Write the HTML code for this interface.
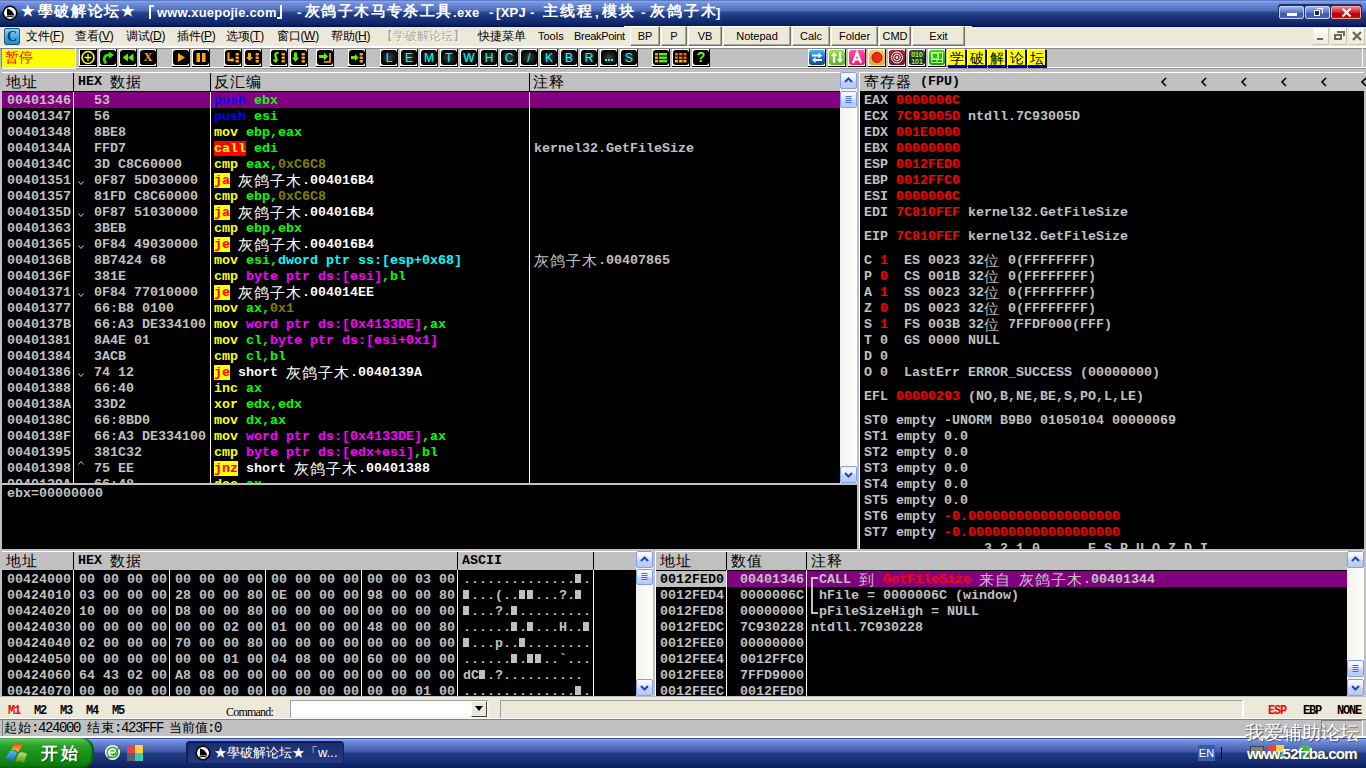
<!DOCTYPE html><html><head><meta charset="utf-8"><style>
*{margin:0;padding:0;box-sizing:border-box}
html,body{width:1366px;height:768px;overflow:hidden;background:#c0c0c0;position:relative;font-family:"Liberation Sans",sans-serif}
div{position:absolute}
.m{font-family:"Liberation Mono",monospace;font-weight:bold;font-size:13.33px;line-height:16px;height:16px;white-space:pre;color:#c0c0c0;letter-spacing:0}
.m i{display:inline-block;width:16px;height:16px;line-height:16px;vertical-align:top;font-style:normal;font-weight:normal;font-size:15px;font-family:"Liberation Sans",sans-serif}
.blk{display:inline-block;width:8px;height:9px;position:relative;vertical-align:0}
.blk:after{content:"";position:absolute;left:0;top:0;width:6px;height:9px;background:#c0c0c0}
.ui{font-family:"Liberation Sans",sans-serif;font-size:11px;line-height:13px;white-space:pre;color:#000}
.hdr{background:#c0c0c0}
.tb{width:18px;height:18px;background:#000;border-radius:3px}
.sb{background:linear-gradient(90deg,#f3f1ec,#fefefb)}
.sbb{background:linear-gradient(180deg,#fdfdff 0%,#e4e8fc 45%,#c4d2fc 55%,#b8c8f8 100%);border:1px solid #7ca0f4;border-radius:2px}
</style></head><body><div style="left:0px;top:0px;width:1366px;height:27px;background:linear-gradient(180deg,#2f4a90 0px,#8ca8f0 1px,#7090e0 3px,#4e6ab4 11px,#2c4894 12px,#1e3882 16px,#122a6c 22px,#0c2060 25px,#001060 26px)"></div>
<div style="left:624px;top:26px;width:348px;height:1px;background:#f8f6ee"></div>
<div style="left:21px;top:2px;white-space:pre;color:#fff;font-weight:bold;font-size:15px;line-height:18px"><i style="display:inline-block;width:16.7px;font-style:normal">★</i><i style="display:inline-block;width:16.7px;font-style:normal">學</i><i style="display:inline-block;width:16.7px;font-style:normal">破</i><i style="display:inline-block;width:16.7px;font-style:normal">解</i><i style="display:inline-block;width:16.7px;font-style:normal">论</i><i style="display:inline-block;width:16.7px;font-style:normal">坛</i><i style="display:inline-block;width:16.7px;font-style:normal">★</i></div>
<div style="left:149px;top:5px;width:2px;height:14px;background:#fff"></div>
<div style="left:149px;top:5px;width:5px;height:2px;background:#fff"></div>
<div style="left:157px;top:4px;white-space:pre;color:#fff;font-weight:bold;font-size:13px;line-height:18px;letter-spacing:0.2px">www.xuepojie.com</div>
<div style="left:280px;top:5px;width:2px;height:14px;background:#fff"></div>
<div style="left:277px;top:17px;width:5px;height:2px;background:#fff"></div>
<div style="left:297px;top:4px;white-space:pre;color:#fff;font-weight:bold;font-size:13px;line-height:18px;letter-spacing:0px">-</div>
<div style="left:305px;top:2px;white-space:pre;color:#fff;font-weight:bold;font-size:15px;line-height:18px"><i style="display:inline-block;width:16.4px;font-style:normal">灰</i><i style="display:inline-block;width:16.4px;font-style:normal">鸽</i><i style="display:inline-block;width:16.4px;font-style:normal">子</i><i style="display:inline-block;width:16.4px;font-style:normal">木</i><i style="display:inline-block;width:16.4px;font-style:normal">马</i><i style="display:inline-block;width:16.4px;font-style:normal">专</i><i style="display:inline-block;width:16.4px;font-style:normal">杀</i><i style="display:inline-block;width:16.4px;font-style:normal">工</i><i style="display:inline-block;width:16.4px;font-style:normal">具</i></div>
<div style="left:453px;top:4px;white-space:pre;color:#fff;font-weight:bold;font-size:13px;line-height:18px;letter-spacing:0.3px">.exe</div>
<div style="left:489px;top:4px;white-space:pre;color:#fff;font-weight:bold;font-size:13px;line-height:18px;letter-spacing:0px">-</div>
<div style="left:496px;top:4px;white-space:pre;color:#fff;font-weight:bold;font-size:13px;line-height:18px;letter-spacing:0.3px">[XPJ</div>
<div style="left:530px;top:4px;white-space:pre;color:#fff;font-weight:bold;font-size:13px;line-height:18px;letter-spacing:0px">-</div>
<div style="left:543px;top:2px;white-space:pre;color:#fff;font-weight:bold;font-size:15px;line-height:18px"><i style="display:inline-block;width:17px;font-style:normal">主</i><i style="display:inline-block;width:17px;font-style:normal">线</i><i style="display:inline-block;width:17px;font-style:normal">程</i></div>
<div style="left:595px;top:4px;white-space:pre;color:#fff;font-weight:bold;font-size:13px;line-height:18px;letter-spacing:0px">,</div>
<div style="left:602px;top:2px;white-space:pre;color:#fff;font-weight:bold;font-size:15px;line-height:18px"><i style="display:inline-block;width:17px;font-style:normal">模</i><i style="display:inline-block;width:17px;font-style:normal">块</i></div>
<div style="left:641px;top:4px;white-space:pre;color:#fff;font-weight:bold;font-size:13px;line-height:18px;letter-spacing:0px">-</div>
<div style="left:650px;top:2px;white-space:pre;color:#fff;font-weight:bold;font-size:15px;line-height:18px"><i style="display:inline-block;width:17px;font-style:normal">灰</i><i style="display:inline-block;width:17px;font-style:normal">鸽</i><i style="display:inline-block;width:17px;font-style:normal">子</i><i style="display:inline-block;width:17px;font-style:normal">木</i></div>
<div style="left:716px;top:4px;white-space:pre;color:#fff;font-weight:bold;font-size:13px;line-height:18px;letter-spacing:0px">]</div>
<div style="left:1278px;top:4px;width:84px;height:17px;background:#20306c;border-radius:3px"></div>
<div style="left:1279px;top:6px;width:25px;height:13px;background:linear-gradient(180deg,#9ab4f4,#5a78c8 50%,#3a58a8 51%,#4a68b8);border:1px solid #c0d0ff;border-radius:2px"></div>
<div style="left:1287px;top:13px;width:10px;height:3px;background:#fff;border:0"></div>
<div style="left:1305px;top:6px;width:25px;height:13px;background:linear-gradient(180deg,#9ab4f4,#5a78c8 50%,#3a58a8 51%,#4a68b8);border:1px solid #c0d0ff;border-radius:2px"></div>
<div style="left:1314px;top:10px;width:6px;height:6px;border:1.5px solid #fff;background:#1a2a60"></div>
<div style="left:1317px;top:8px;width:6px;height:6px;border:1.5px solid #fff;border-left:none;border-bottom:none"></div>
<div style="left:1331px;top:6px;width:30px;height:13px;background:linear-gradient(180deg,#f08080,#d02020 50%,#b00000 51%,#c01010);border:1px solid #ffa0a0;border-radius:2px"></div>
<svg style="position:absolute;left:1341px;top:7px" width="11" height="11"><path d="M1.5 1.5 L9.5 9.5 M9.5 1.5 L1.5 9.5" stroke="#fff" stroke-width="2.2"/></svg>
<div style="left:0px;top:27px;width:1366px;height:19px;background:#ece9d8"></div>
<div style="left:0px;top:46px;width:1366px;height:2px;background:#fff"></div>
<div style="left:4px;top:28px;width:16px;height:17px;background:linear-gradient(180deg,#8cd4f4,#3aa8e0 60%,#2a88c0);border:1px solid #1a5a80;border-radius:2px"></div>
<div style="left:7px;top:29px;font-family:'Liberation Serif',serif;font-size:14px;line-height:15px;color:#10405a;font-weight:bold">C</div>
<div class="ui" style="left:26px;top:29px;font-size:12px;line-height:14px;letter-spacing:-0.3px">文件(<u>F</u>)</div>
<div class="ui" style="left:75px;top:29px;font-size:12px;line-height:14px;letter-spacing:-0.3px">查看(<u>V</u>)</div>
<div class="ui" style="left:126px;top:29px;font-size:12px;line-height:14px;letter-spacing:-0.3px">调试(<u>D</u>)</div>
<div class="ui" style="left:177px;top:29px;font-size:12px;line-height:14px;letter-spacing:-0.3px">插件(<u>P</u>)</div>
<div class="ui" style="left:226px;top:29px;font-size:12px;line-height:14px;letter-spacing:-0.3px">选项(<u>T</u>)</div>
<div class="ui" style="left:277px;top:29px;font-size:12px;line-height:14px;letter-spacing:-0.3px">窗口(<u>W</u>)</div>
<div class="ui" style="left:331px;top:29px;font-size:12px;line-height:14px;letter-spacing:-0.3px">帮助(<u>H</u>)</div>
<div class="ui" style="left:381px;top:29px;font-size:12px;line-height:14px;color:#aca899;text-shadow:1px 1px 0 #fff">【学破解论坛】</div>
<div class="ui" style="left:478px;top:29px;font-size:12px;line-height:14px">快捷菜单</div>
<div class="ui" style="left:538px;top:29px;font-size:11px;line-height:14px">Tools</div>
<div class="ui" style="left:574px;top:29px;font-size:11px;line-height:14px;letter-spacing:-0.3px">BreakPoint</div>
<div style="left:630px;top:26px;width:30px;height:20px;background:#ece9d8;border-top:1px solid #fff;border-left:1px solid #fff;border-right:1px solid #716f64;border-bottom:1px solid #716f64;box-shadow:inset -1px -1px 0 #aca899"><div class="ui" style="position:static;text-align:center;padding-top:3px;font-size:11px">BP</div></div>
<div style="left:661px;top:26px;width:26px;height:20px;background:#ece9d8;border-top:1px solid #fff;border-left:1px solid #fff;border-right:1px solid #716f64;border-bottom:1px solid #716f64;box-shadow:inset -1px -1px 0 #aca899"><div class="ui" style="position:static;text-align:center;padding-top:3px;font-size:11px">P</div></div>
<div style="left:688px;top:26px;width:34px;height:20px;background:#ece9d8;border-top:1px solid #fff;border-left:1px solid #fff;border-right:1px solid #716f64;border-bottom:1px solid #716f64;box-shadow:inset -1px -1px 0 #aca899"><div class="ui" style="position:static;text-align:center;padding-top:3px;font-size:11px">VB</div></div>
<div style="left:723px;top:26px;width:68px;height:20px;background:#ece9d8;border-top:1px solid #fff;border-left:1px solid #fff;border-right:1px solid #716f64;border-bottom:1px solid #716f64;box-shadow:inset -1px -1px 0 #aca899"><div class="ui" style="position:static;text-align:center;padding-top:3px;font-size:11px">Notepad</div></div>
<div style="left:792px;top:26px;width:38px;height:20px;background:#ece9d8;border-top:1px solid #fff;border-left:1px solid #fff;border-right:1px solid #716f64;border-bottom:1px solid #716f64;box-shadow:inset -1px -1px 0 #aca899"><div class="ui" style="position:static;text-align:center;padding-top:3px;font-size:11px">Calc</div></div>
<div style="left:831px;top:26px;width:47px;height:20px;background:#ece9d8;border-top:1px solid #fff;border-left:1px solid #fff;border-right:1px solid #716f64;border-bottom:1px solid #716f64;box-shadow:inset -1px -1px 0 #aca899"><div class="ui" style="position:static;text-align:center;padding-top:3px;font-size:11px">Folder</div></div>
<div style="left:879px;top:26px;width:32px;height:20px;background:#ece9d8;border-top:1px solid #fff;border-left:1px solid #fff;border-right:1px solid #716f64;border-bottom:1px solid #716f64;box-shadow:inset -1px -1px 0 #aca899"><div class="ui" style="position:static;text-align:center;padding-top:3px;font-size:11px">CMD</div></div>
<div style="left:912px;top:26px;width:53px;height:20px;background:#ece9d8;border-top:1px solid #fff;border-left:1px solid #fff;border-right:1px solid #716f64;border-bottom:1px solid #716f64;box-shadow:inset -1px -1px 0 #aca899"><div class="ui" style="position:static;text-align:center;padding-top:3px;font-size:11px">Exit</div></div>
<div style="left:1313px;top:28px;width:16px;height:17px;background:linear-gradient(180deg,#fefefe,#ece9d8);border-right:1px solid #c8c4b0;border-bottom:1px solid #c8c4b0"></div>
<div style="left:1331px;top:28px;width:16px;height:17px;background:linear-gradient(180deg,#fefefe,#ece9d8);border-right:1px solid #c8c4b0;border-bottom:1px solid #c8c4b0"></div>
<div style="left:1349px;top:28px;width:16px;height:17px;background:linear-gradient(180deg,#fefefe,#ece9d8);border-right:1px solid #c8c4b0;border-bottom:1px solid #c8c4b0"></div>
<div style="left:1317px;top:38px;width:6px;height:2px;background:#6a6a5a"></div>
<div style="left:1334px;top:34px;width:8px;height:6px;border:2px solid #6a6a5a;border-top-width:2px"></div>
<div style="left:1337px;top:31px;width:8px;height:5px;border-top:2px solid #6a6a5a;border-right:2px solid #6a6a5a"></div>
<svg style="position:absolute;left:1352px;top:31px" width="10" height="10"><path d="M1 1 L9 9 M9 1 L1 9" stroke="#6a6a5a" stroke-width="2.4"/></svg>
<div style="left:0px;top:48px;width:1366px;height:1px;background:#8a8a8a"></div>
<div style="left:0px;top:49px;width:1366px;height:18px;background:#c0c0c0"></div>
<div style="left:0px;top:67px;width:1366px;height:1px;background:#fff"></div>
<div style="left:0px;top:68px;width:1366px;height:1px;background:#9a9a9a"></div>
<div style="left:0px;top:69px;width:1366px;height:3px;background:#c0c0c0"></div>
<div style="left:1362px;top:48px;width:1px;height:20px;background:#fff"></div>
<div style="left:1px;top:48px;width:75px;height:21px;background:#ffff00;border:1px solid #808080;border-right-color:#fff;border-bottom-color:#fff"></div>
<div class="ui" style="left:5px;top:49px;font-size:14px;line-height:16px;color:#ff0000">暂停</div>
<div style="left:79px;top:49px;width:18px;height:18px;background:#fffbef;border-right:1px solid #000;border-bottom:1px solid #000"></div>
<div style="left:80px;top:50px;width:16px;height:15px;background:#000;border-radius:0px"></div>
<div style="left:99px;top:49px;width:18px;height:18px;background:#fffbef;border-right:1px solid #000;border-bottom:1px solid #000"></div>
<div style="left:100px;top:50px;width:16px;height:15px;background:#000;border-radius:3px"></div>
<div style="left:119px;top:49px;width:18px;height:18px;background:#fffbef;border-right:1px solid #000;border-bottom:1px solid #000"></div>
<div style="left:120px;top:50px;width:16px;height:15px;background:#000;border-radius:3px"></div>
<div style="left:139px;top:49px;width:18px;height:18px;background:#fffbef;border-right:1px solid #000;border-bottom:1px solid #000"></div>
<div style="left:140px;top:50px;width:16px;height:15px;background:#000;border-radius:3px"></div>
<div style="left:172px;top:49px;width:18px;height:18px;background:#fffbef;border-right:1px solid #000;border-bottom:1px solid #000"></div>
<div style="left:173px;top:50px;width:16px;height:15px;background:#000;border-radius:3px"></div>
<div style="left:192px;top:49px;width:18px;height:18px;background:#fffbef;border-right:1px solid #000;border-bottom:1px solid #000"></div>
<div style="left:193px;top:50px;width:16px;height:15px;background:#000;border-radius:3px"></div>
<div style="left:224px;top:49px;width:18px;height:18px;background:#fffbef;border-right:1px solid #000;border-bottom:1px solid #000"></div>
<div style="left:225px;top:50px;width:16px;height:15px;background:#000;border-radius:3px"></div>
<div style="left:244px;top:49px;width:18px;height:18px;background:#fffbef;border-right:1px solid #000;border-bottom:1px solid #000"></div>
<div style="left:245px;top:50px;width:16px;height:15px;background:#000;border-radius:3px"></div>
<div style="left:270px;top:49px;width:18px;height:18px;background:#fffbef;border-right:1px solid #000;border-bottom:1px solid #000"></div>
<div style="left:271px;top:50px;width:16px;height:15px;background:#000;border-radius:3px"></div>
<div style="left:290px;top:49px;width:18px;height:18px;background:#fffbef;border-right:1px solid #000;border-bottom:1px solid #000"></div>
<div style="left:291px;top:50px;width:16px;height:15px;background:#000;border-radius:3px"></div>
<div style="left:316px;top:49px;width:18px;height:18px;background:#fffbef;border-right:1px solid #000;border-bottom:1px solid #000"></div>
<div style="left:317px;top:50px;width:16px;height:15px;background:#000;border-radius:3px"></div>
<div style="left:348px;top:49px;width:18px;height:18px;background:#fffbef;border-right:1px solid #000;border-bottom:1px solid #000"></div>
<div style="left:349px;top:50px;width:16px;height:15px;background:#000;border-radius:3px"></div>
<div style="left:380px;top:49px;width:18px;height:18px;background:#fffbef;border-right:1px solid #000;border-bottom:1px solid #000"></div>
<div style="left:381px;top:50px;width:16px;height:15px;background:radial-gradient(#404040,#000 75%);border-radius:3px"></div>
<div style="left:381px;top:51px;width:16px;height:15px;text-align:center;color:#00ffff;font-family:'Liberation Sans',sans-serif;font-size:12px;line-height:15px">L</div>
<div style="left:400px;top:49px;width:18px;height:18px;background:#fffbef;border-right:1px solid #000;border-bottom:1px solid #000"></div>
<div style="left:401px;top:50px;width:16px;height:15px;background:radial-gradient(#404040,#000 75%);border-radius:3px"></div>
<div style="left:401px;top:51px;width:16px;height:15px;text-align:center;color:#00ffff;font-family:'Liberation Sans',sans-serif;font-size:12px;line-height:15px">E</div>
<div style="left:420px;top:49px;width:18px;height:18px;background:#fffbef;border-right:1px solid #000;border-bottom:1px solid #000"></div>
<div style="left:421px;top:50px;width:16px;height:15px;background:radial-gradient(#404040,#000 75%);border-radius:3px"></div>
<div style="left:421px;top:51px;width:16px;height:15px;text-align:center;color:#00ffff;font-family:'Liberation Sans',sans-serif;font-size:12px;line-height:15px">M</div>
<div style="left:440px;top:49px;width:18px;height:18px;background:#fffbef;border-right:1px solid #000;border-bottom:1px solid #000"></div>
<div style="left:441px;top:50px;width:16px;height:15px;background:radial-gradient(#404040,#000 75%);border-radius:3px"></div>
<div style="left:441px;top:51px;width:16px;height:15px;text-align:center;color:#00ffff;font-family:'Liberation Sans',sans-serif;font-size:12px;line-height:15px">T</div>
<div style="left:460px;top:49px;width:18px;height:18px;background:#fffbef;border-right:1px solid #000;border-bottom:1px solid #000"></div>
<div style="left:461px;top:50px;width:16px;height:15px;background:radial-gradient(#404040,#000 75%);border-radius:3px"></div>
<div style="left:461px;top:51px;width:16px;height:15px;text-align:center;color:#00ffff;font-family:'Liberation Sans',sans-serif;font-size:12px;line-height:15px">W</div>
<div style="left:480px;top:49px;width:18px;height:18px;background:#fffbef;border-right:1px solid #000;border-bottom:1px solid #000"></div>
<div style="left:481px;top:50px;width:16px;height:15px;background:radial-gradient(#404040,#000 75%);border-radius:3px"></div>
<div style="left:481px;top:51px;width:16px;height:15px;text-align:center;color:#00ffff;font-family:'Liberation Sans',sans-serif;font-size:12px;line-height:15px">H</div>
<div style="left:500px;top:49px;width:18px;height:18px;background:#fffbef;border-right:1px solid #000;border-bottom:1px solid #000"></div>
<div style="left:501px;top:50px;width:16px;height:15px;background:radial-gradient(#404040,#000 75%);border-radius:3px"></div>
<div style="left:501px;top:51px;width:16px;height:15px;text-align:center;color:#00ffff;font-family:'Liberation Sans',sans-serif;font-size:12px;line-height:15px">C</div>
<div style="left:520px;top:49px;width:18px;height:18px;background:#fffbef;border-right:1px solid #000;border-bottom:1px solid #000"></div>
<div style="left:521px;top:50px;width:16px;height:15px;background:radial-gradient(#404040,#000 75%);border-radius:3px"></div>
<div style="left:521px;top:51px;width:16px;height:15px;text-align:center;color:#00ffff;font-family:'Liberation Sans',sans-serif;font-size:12px;line-height:15px">/</div>
<div style="left:540px;top:49px;width:18px;height:18px;background:#fffbef;border-right:1px solid #000;border-bottom:1px solid #000"></div>
<div style="left:541px;top:50px;width:16px;height:15px;background:radial-gradient(#404040,#000 75%);border-radius:3px"></div>
<div style="left:541px;top:51px;width:16px;height:15px;text-align:center;color:#00ffff;font-family:'Liberation Sans',sans-serif;font-size:12px;line-height:15px">K</div>
<div style="left:560px;top:49px;width:18px;height:18px;background:#fffbef;border-right:1px solid #000;border-bottom:1px solid #000"></div>
<div style="left:561px;top:50px;width:16px;height:15px;background:radial-gradient(#404040,#000 75%);border-radius:3px"></div>
<div style="left:561px;top:51px;width:16px;height:15px;text-align:center;color:#00ffff;font-family:'Liberation Sans',sans-serif;font-size:12px;line-height:15px">B</div>
<div style="left:580px;top:49px;width:18px;height:18px;background:#fffbef;border-right:1px solid #000;border-bottom:1px solid #000"></div>
<div style="left:581px;top:50px;width:16px;height:15px;background:radial-gradient(#404040,#000 75%);border-radius:3px"></div>
<div style="left:581px;top:51px;width:16px;height:15px;text-align:center;color:#00ffff;font-family:'Liberation Sans',sans-serif;font-size:12px;line-height:15px">R</div>
<div style="left:600px;top:49px;width:18px;height:18px;background:#fffbef;border-right:1px solid #000;border-bottom:1px solid #000"></div>
<div style="left:601px;top:50px;width:16px;height:15px;background:radial-gradient(#404040,#000 75%);border-radius:3px"></div>
<svg style="position:absolute;left:601px;top:50px" width="16" height="15"><rect x="4" y="9" width="2" height="2" fill="#00ffff"/><rect x="7" y="9" width="2" height="2" fill="#00ffff"/><rect x="10" y="9" width="2" height="2" fill="#00ffff"/></svg>
<div style="left:620px;top:49px;width:18px;height:18px;background:#fffbef;border-right:1px solid #000;border-bottom:1px solid #000"></div>
<div style="left:621px;top:50px;width:16px;height:15px;background:radial-gradient(#404040,#000 75%);border-radius:3px"></div>
<div style="left:621px;top:51px;width:16px;height:15px;text-align:center;color:#00ffff;font-family:'Liberation Sans',sans-serif;font-size:12px;line-height:15px">S</div>
<div style="left:652px;top:49px;width:18px;height:18px;background:#fffbef;border-right:1px solid #000;border-bottom:1px solid #000"></div>
<div style="left:653px;top:50px;width:16px;height:15px;background:#000;border-radius:3px"></div>
<div style="left:672px;top:49px;width:18px;height:18px;background:#fffbef;border-right:1px solid #000;border-bottom:1px solid #000"></div>
<div style="left:673px;top:50px;width:16px;height:15px;background:#000;border-radius:3px"></div>
<div style="left:692px;top:49px;width:18px;height:18px;background:#fffbef;border-right:1px solid #000;border-bottom:1px solid #000"></div>
<div style="left:693px;top:50px;width:16px;height:15px;background:#000;border-radius:3px"></div>
<svg style="position:absolute;left:80px;top:50px" width="16" height="15"><circle cx="8" cy="7.5" r="6" fill="none" stroke="#ffff00" stroke-width="1.6"/><path d="M8 4V11M4.5 7.5H11.5" stroke="#ffff00" stroke-width="1.3"/></svg>
<svg style="position:absolute;left:100px;top:50px" width="16" height="15"><path d="M6 13.5 Q3 9 5 6.5 Q7 4.5 10 5" fill="none" stroke="#20f000" stroke-width="2.6"/><path d="M9 1.5 L14 5 L9 8.5Z" fill="#20f000"/></svg>
<svg style="position:absolute;left:120px;top:50px" width="16" height="15"><path d="M8 3.5 L2.5 7.5 L8 11.5Z M13.5 3.5 L8 7.5 L13.5 11.5Z" fill="#50f000"/></svg>
<div style="left:140px;top:50px;width:16px;height:15px;text-align:center;color:#ffa000;font-weight:bold;font-size:12px;line-height:15px;font-family:'Liberation Serif',serif">X</div>
<svg style="position:absolute;left:173px;top:50px" width="16" height="15"><path d="M5 3 L12 7.5 L5 12Z" fill="#ffa800"/></svg>
<svg style="position:absolute;left:193px;top:50px" width="16" height="15"><rect x="3.5" y="3" width="3.5" height="9" fill="#ffa800"/><rect x="9" y="3" width="3.5" height="9" fill="#ffa800"/></svg>
<svg style="position:absolute;left:225px;top:50px" width="16" height="15"><path d="M3.5 2.5V10H7" fill="none" stroke="#ffa800" stroke-width="2"/><path d="M6.5 7.5L9.5 10L6.5 12.5Z" fill="#ffa800"/><rect x="10.5" y="3" width="3.5" height="2.4" rx="1" fill="#ffa800"/><rect x="10.5" y="6.5" width="3.5" height="2.4" rx="1" fill="#ffa800"/><rect x="10.5" y="10" width="3.5" height="2.4" rx="1" fill="#ffa800"/></svg>
<svg style="position:absolute;left:245px;top:50px" width="16" height="15"><rect x="3" y="3" width="3" height="4" fill="#ffa800"/><path d="M1 7H8L4.5 11Z" fill="#ffa800"/><rect x="10.5" y="3" width="3.5" height="2.4" rx="1" fill="#ffa800"/><rect x="10.5" y="6.5" width="3.5" height="2.4" rx="1" fill="#ffa800"/><rect x="10.5" y="10" width="3.5" height="2.4" rx="1" fill="#ffa800"/></svg>
<svg style="position:absolute;left:271px;top:50px" width="16" height="15"><path d="M7.5 2.5 Q3 3.5 4.5 6.5 Q6 8.5 4.5 10" fill="none" stroke="#60f000" stroke-width="2.2"/><path d="M1.5 9.5H8L4.5 13Z" fill="#60f000"/><rect x="10.5" y="3" width="3.5" height="2.4" rx="1" fill="#ffa800"/><rect x="10.5" y="6.5" width="3.5" height="2.4" rx="1" fill="#ffa800"/><rect x="10.5" y="10" width="3.5" height="2.4" rx="1" fill="#ffa800"/></svg>
<svg style="position:absolute;left:291px;top:50px" width="16" height="15"><rect x="3" y="2.5" width="3" height="5" fill="#60f000"/><path d="M1 7.5H8L4.5 12Z" fill="#60f000"/><rect x="10.5" y="3" width="3.5" height="2.4" rx="1" fill="#ffa800"/><rect x="10.5" y="6.5" width="3.5" height="2.4" rx="1" fill="#ffa800"/><rect x="10.5" y="10" width="3.5" height="2.4" rx="1" fill="#ffa800"/></svg>
<svg style="position:absolute;left:317px;top:50px" width="16" height="15"><rect x="2" y="5" width="5" height="3" fill="#60f000"/><path d="M7 2.5L11 6.5L7 10.5Z" fill="#60f000"/><path d="M13 3V12H7" fill="none" stroke="#ffa800" stroke-width="1.6"/></svg>
<svg style="position:absolute;left:349px;top:50px" width="16" height="15"><rect x="2" y="6" width="4" height="3" fill="#60f000"/><path d="M6 4L9.5 7.5L6 11Z" fill="#60f000"/><rect x="10.5" y="3" width="3.5" height="2.4" rx="1" fill="#ffa800"/><rect x="10.5" y="6.5" width="3.5" height="2.4" rx="1" fill="#ffa800"/><rect x="10.5" y="10" width="3.5" height="2.4" rx="1" fill="#ffa800"/></svg>
<svg style="position:absolute;left:653px;top:50px" width="16" height="15"><rect x="2" y="3" width="3" height="2.4" fill="#ffa800"/><rect x="6" y="3" width="8" height="2.4" fill="#60f000"/><rect x="2" y="6.5" width="3" height="2.4" fill="#ffa800"/><rect x="6" y="6.5" width="8" height="2.4" fill="#60f000"/><rect x="2" y="10" width="3" height="2.4" fill="#ffa800"/><rect x="6" y="10" width="8" height="2.4" fill="#60f000"/></svg>
<svg style="position:absolute;left:673px;top:50px" width="16" height="15"><g fill="#ff6000"><rect x="2" y="3" width="3" height="2.4"/><rect x="6" y="3" width="3.5" height="2.4"/><rect x="10.5" y="3" width="3" height="2.4"/><rect x="2" y="6.5" width="3" height="2.4"/><rect x="6" y="6.5" width="3.5" height="2.4"/><rect x="10.5" y="6.5" width="3" height="2.4"/></g><g fill="#ffc000"><rect x="2" y="10" width="3" height="2.4"/><rect x="6" y="10" width="3.5" height="2.4"/><rect x="10.5" y="10" width="3" height="2.4"/></g></svg>
<div style="left:693px;top:50px;width:16px;height:15px;text-align:center;color:#60ff00;font-weight:bold;font-size:14px;line-height:15px">?</div>
<div style="left:808px;top:49px;width:18px;height:18px;background:#fffbef;border-right:1px solid #000;border-bottom:1px solid #000"></div>
<div style="left:809px;top:50px;width:16px;height:15px;background:linear-gradient(180deg,#40b8f8,#1a70c8 55%,#0a4890);border-radius:3px"></div>
<svg style="position:absolute;left:809px;top:50px" width="16" height="15"><path d="M3 5.5H10" stroke="#fff" stroke-width="2"/><path d="M9.5 2.5L13 5.5L9.5 8.5Z" fill="#fff"/><path d="M6 10H13" stroke="#fff" stroke-width="2"/><path d="M6.5 7L3 10L6.5 13Z" fill="#fff"/></svg>
<div style="left:828px;top:49px;width:18px;height:18px;background:#fffbef;border-right:1px solid #000;border-bottom:1px solid #000"></div>
<div style="left:829px;top:50px;width:16px;height:15px;background:linear-gradient(180deg,#a0e050,#58b020);border-radius:3px"></div>
<svg style="position:absolute;left:829px;top:50px" width="16" height="15"><path d="M5 5V13" stroke="#fff" stroke-width="2.2"/><path d="M2 6L5 2L8 6Z" fill="#fff"/><path d="M11 2V10" stroke="#fff" stroke-width="2.2"/><path d="M8 9L11 13L14 9Z" fill="#fff"/></svg>
<div style="left:848px;top:49px;width:18px;height:18px;background:#fffbef;border-right:1px solid #000;border-bottom:1px solid #000"></div>
<div style="left:849px;top:50px;width:16px;height:15px;background:linear-gradient(180deg,#ff50b0,#f01870);border-radius:3px"></div>
<svg style="position:absolute;left:849px;top:50px" width="16" height="15"><path d="M4 13L8 2.5L12 13M5.5 9.5H10.5" fill="none" stroke="#fff" stroke-width="2.2"/></svg>
<div style="left:868px;top:49px;width:18px;height:18px;background:#fffbef;border-right:1px solid #000;border-bottom:1px solid #000"></div>
<div style="left:869px;top:50px;width:16px;height:15px;background:linear-gradient(180deg,#f8d060,#f0a020);border-radius:3px"></div>
<svg style="position:absolute;left:869px;top:50px" width="16" height="15"><circle cx="8" cy="7.5" r="5" fill="#f02818" stroke="#802010" stroke-width="1"/></svg>
<div style="left:888px;top:49px;width:18px;height:18px;background:#fffbef;border-right:1px solid #000;border-bottom:1px solid #000"></div>
<div style="left:889px;top:50px;width:16px;height:15px;background:linear-gradient(180deg,#b02838,#701020);border-radius:3px"></div>
<svg style="position:absolute;left:889px;top:50px" width="16" height="15"><circle cx="8" cy="7.5" r="5.5" fill="none" stroke="#fff" stroke-width="1"/><circle cx="8" cy="7.5" r="3.3" fill="none" stroke="#fff" stroke-width="1"/><circle cx="8" cy="7.5" r="1.3" fill="#fff"/></svg>
<div style="left:908px;top:49px;width:18px;height:18px;background:#fffbef;border-right:1px solid #000;border-bottom:1px solid #000"></div>
<div style="left:909px;top:50px;width:16px;height:15px;background:linear-gradient(180deg,#404840,#182018);border-radius:3px"></div>
<svg style="position:absolute;left:909px;top:50px" width="16" height="15"><text x="8" y="7" text-anchor="middle" font-size="7" font-family="Liberation Sans" font-weight="bold" fill="#90ff40">010</text><text x="8" y="14" text-anchor="middle" font-size="7" font-family="Liberation Sans" font-weight="bold" fill="#90ff40">101</text></svg>
<div style="left:928px;top:49px;width:18px;height:18px;background:#fffbef;border-right:1px solid #000;border-bottom:1px solid #000"></div>
<div style="left:929px;top:50px;width:16px;height:15px;background:linear-gradient(180deg,#30e030,#08a008);border-radius:3px"></div>
<svg style="position:absolute;left:929px;top:50px" width="16" height="15"><rect x="2.5" y="2.5" width="11" height="10" fill="none" stroke="#c0ff80" stroke-width="1"/><rect x="3.5" y="3.5" width="5" height="5" fill="#20c020" stroke="#c0ff80" stroke-width="0.8"/><path d="M9.5 3V9M3 9.5H13M8 9.5V12.5" stroke="#c0ff80" stroke-width="1"/></svg>
<div style="left:947px;top:49px;width:19px;height:18px;background:#ffff00;border-top:1px solid #fff;border-left:1px solid #fff;border-right:1px solid #0000c0;border-bottom:2px solid #0000c0;box-shadow:1px 1px 0 #000"><div style="position:static;text-align:center;font-size:14px;line-height:16px;color:#000">学</div></div>
<div style="left:967px;top:49px;width:19px;height:18px;background:#ffff00;border-top:1px solid #fff;border-left:1px solid #fff;border-right:1px solid #0000c0;border-bottom:2px solid #0000c0;box-shadow:1px 1px 0 #000"><div style="position:static;text-align:center;font-size:14px;line-height:16px;color:#000">破</div></div>
<div style="left:987px;top:49px;width:19px;height:18px;background:#ffff00;border-top:1px solid #fff;border-left:1px solid #fff;border-right:1px solid #0000c0;border-bottom:2px solid #0000c0;box-shadow:1px 1px 0 #000"><div style="position:static;text-align:center;font-size:14px;line-height:16px;color:#000">解</div></div>
<div style="left:1007px;top:49px;width:19px;height:18px;background:#ffff00;border-top:1px solid #fff;border-left:1px solid #fff;border-right:1px solid #0000c0;border-bottom:2px solid #0000c0;box-shadow:1px 1px 0 #000"><div style="position:static;text-align:center;font-size:14px;line-height:16px;color:#000">论</div></div>
<div style="left:1027px;top:49px;width:19px;height:18px;background:#ffff00;border-top:1px solid #fff;border-left:1px solid #fff;border-right:1px solid #0000c0;border-bottom:2px solid #0000c0;box-shadow:1px 1px 0 #000"><div style="position:static;text-align:center;font-size:14px;line-height:16px;color:#000">坛</div></div>
<div style="left:2px;top:72px;width:855px;height:1px;background:#fff"></div>
<div style="left:2px;top:73px;width:838px;height:18px;background:#c0c0c0"></div>
<div style="left:2px;top:91px;width:838px;height:1px;background:#000"></div>
<div style="left:2px;top:92px;width:838px;height:391px;background:#000"></div>
<div style="left:73px;top:73px;width:1px;height:18px;background:#000"></div>
<div style="left:73px;top:92px;width:1px;height:391px;background:#fff"></div>
<div style="left:210px;top:73px;width:1px;height:18px;background:#000"></div>
<div style="left:210px;top:92px;width:1px;height:391px;background:#fff"></div>
<div style="left:529px;top:73px;width:1px;height:18px;background:#000"></div>
<div style="left:529px;top:92px;width:1px;height:391px;background:#fff"></div>
<div class="m" style="left:6px;top:74px;color:#000"><i>地</i><i>址</i></div>
<div class="m" style="left:78px;top:74px;color:#000">HEX <i>数</i><i>据</i></div>
<div class="m" style="left:214px;top:74px;color:#000"><i>反</i><i>汇</i><i>编</i></div>
<div class="m" style="left:533px;top:74px;color:#000"><i>注</i><i>释</i></div>
<div style="left:2px;top:92px;width:838px;height:391px;overflow:hidden">
<div style="left:0px;top:0px;width:838px;height:16px;background:#800080"></div>
<div style="left:71px;top:0px;width:1px;height:16px;background:#fff"></div>
<div style="left:208px;top:0px;width:1px;height:16px;background:#fff"></div>
<div style="left:527px;top:0px;width:1px;height:16px;background:#fff"></div>
<div class="m" style="left:5px;top:1px;">00401346</div>
<div class="m" style="left:92px;top:1px;">53</div>
<div class="m" style="left:212px;top:1px;"><span style="color:#0000ff">push</span> <span style="color:#00ff00">ebx</span></div>
<div class="m" style="left:5px;top:17px;">00401347</div>
<div class="m" style="left:92px;top:17px;">56</div>
<div class="m" style="left:212px;top:17px;"><span style="color:#0000ff">push</span> <span style="color:#00ff00">esi</span></div>
<div class="m" style="left:5px;top:33px;">00401348</div>
<div class="m" style="left:92px;top:33px;">8BE8</div>
<div class="m" style="left:212px;top:33px;"><span style="color:#ffff00">mov</span> <span style="color:#00ff00">ebp,eax</span></div>
<div class="m" style="left:5px;top:49px;">0040134A</div>
<div class="m" style="left:92px;top:49px;">FFD7</div>
<div class="m" style="left:212px;top:49px;"><span style="color:#ffff00;background:#ff0000">call</span> <span style="color:#00ff00">edi</span></div>
<div class="m" style="left:532px;top:49px;">kernel32.GetFileSize</div>
<div class="m" style="left:5px;top:65px;">0040134C</div>
<div class="m" style="left:92px;top:65px;">3D C8C60000</div>
<div class="m" style="left:212px;top:65px;"><span style="color:#ffff00">cmp</span> <span style="color:#00ff00">eax,</span><span style="color:#808000">0xC6C8</span></div>
<div class="m" style="left:5px;top:81px;">00401351</div>
<svg style="position:absolute;left:76px;top:89px" width="6" height="5"><path d="M0.5 0.5L3 3.5L5.5 0.5" fill="none" stroke="#c0c0c0" stroke-width="1"/></svg>
<div class="m" style="left:92px;top:81px;">0F87 5D030000</div>
<div class="m" style="left:212px;top:81px;"><span style="color:#ff0000;background:#ffff00">ja</span><span style="color:#ffffff"> <i>灰</i><i>鸽</i><i>子</i><i>木</i>.004016B4</span></div>
<div class="m" style="left:5px;top:97px;">00401357</div>
<div class="m" style="left:92px;top:97px;">81FD C8C60000</div>
<div class="m" style="left:212px;top:97px;"><span style="color:#ffff00">cmp</span> <span style="color:#00ff00">ebp,</span><span style="color:#808000">0xC6C8</span></div>
<div class="m" style="left:5px;top:113px;">0040135D</div>
<svg style="position:absolute;left:76px;top:121px" width="6" height="5"><path d="M0.5 0.5L3 3.5L5.5 0.5" fill="none" stroke="#c0c0c0" stroke-width="1"/></svg>
<div class="m" style="left:92px;top:113px;">0F87 51030000</div>
<div class="m" style="left:212px;top:113px;"><span style="color:#ff0000;background:#ffff00">ja</span><span style="color:#ffffff"> <i>灰</i><i>鸽</i><i>子</i><i>木</i>.004016B4</span></div>
<div class="m" style="left:5px;top:129px;">00401363</div>
<div class="m" style="left:92px;top:129px;">3BEB</div>
<div class="m" style="left:212px;top:129px;"><span style="color:#ffff00">cmp</span> <span style="color:#00ff00">ebp,ebx</span></div>
<div class="m" style="left:5px;top:145px;">00401365</div>
<svg style="position:absolute;left:76px;top:153px" width="6" height="5"><path d="M0.5 0.5L3 3.5L5.5 0.5" fill="none" stroke="#c0c0c0" stroke-width="1"/></svg>
<div class="m" style="left:92px;top:145px;">0F84 49030000</div>
<div class="m" style="left:212px;top:145px;"><span style="color:#ff0000;background:#ffff00">je</span><span style="color:#ffffff"> <i>灰</i><i>鸽</i><i>子</i><i>木</i>.004016B4</span></div>
<div class="m" style="left:5px;top:161px;">0040136B</div>
<div class="m" style="left:92px;top:161px;">8B7424 68</div>
<div class="m" style="left:212px;top:161px;"><span style="color:#ffff00">mov</span> <span style="color:#00ff00">esi,</span><span style="color:#00ffff">dword ptr ss:[esp+0x68]</span></div>
<div class="m" style="left:532px;top:161px;"><i>灰</i><i>鸽</i><i>子</i><i>木</i>.00407865</div>
<div class="m" style="left:5px;top:177px;">0040136F</div>
<div class="m" style="left:92px;top:177px;">381E</div>
<div class="m" style="left:212px;top:177px;"><span style="color:#ffff00">cmp</span> <span style="color:#ff00ff">byte ptr ds:[esi]</span><span style="color:#00ff00">,bl</span></div>
<div class="m" style="left:5px;top:193px;">00401371</div>
<svg style="position:absolute;left:76px;top:201px" width="6" height="5"><path d="M0.5 0.5L3 3.5L5.5 0.5" fill="none" stroke="#c0c0c0" stroke-width="1"/></svg>
<div class="m" style="left:92px;top:193px;">0F84 77010000</div>
<div class="m" style="left:212px;top:193px;"><span style="color:#ff0000;background:#ffff00">je</span><span style="color:#ffffff"> <i>灰</i><i>鸽</i><i>子</i><i>木</i>.004014EE</span></div>
<div class="m" style="left:5px;top:209px;">00401377</div>
<div class="m" style="left:92px;top:209px;">66:B8 0100</div>
<div class="m" style="left:212px;top:209px;"><span style="color:#ffff00">mov</span> <span style="color:#00ff00">ax,</span><span style="color:#808000">0x1</span></div>
<div class="m" style="left:5px;top:225px;">0040137B</div>
<div class="m" style="left:92px;top:225px;">66:A3 DE334100</div>
<div class="m" style="left:212px;top:225px;"><span style="color:#ffff00">mov</span> <span style="color:#ff00ff">word ptr ds:[0x4133DE]</span><span style="color:#00ff00">,ax</span></div>
<div class="m" style="left:5px;top:241px;">00401381</div>
<div class="m" style="left:92px;top:241px;">8A4E 01</div>
<div class="m" style="left:212px;top:241px;"><span style="color:#ffff00">mov</span> <span style="color:#00ff00">cl,</span><span style="color:#ff00ff">byte ptr ds:[esi+0x1]</span></div>
<div class="m" style="left:5px;top:257px;">00401384</div>
<div class="m" style="left:92px;top:257px;">3ACB</div>
<div class="m" style="left:212px;top:257px;"><span style="color:#ffff00">cmp</span> <span style="color:#00ff00">cl,bl</span></div>
<div class="m" style="left:5px;top:273px;">00401386</div>
<svg style="position:absolute;left:76px;top:281px" width="6" height="5"><path d="M0.5 0.5L3 3.5L5.5 0.5" fill="none" stroke="#c0c0c0" stroke-width="1"/></svg>
<div class="m" style="left:92px;top:273px;">74 12</div>
<div class="m" style="left:212px;top:273px;"><span style="color:#ff0000;background:#ffff00">je</span><span style="color:#ffffff"> short <i>灰</i><i>鸽</i><i>子</i><i>木</i>.0040139A</span></div>
<div class="m" style="left:5px;top:289px;">00401388</div>
<div class="m" style="left:92px;top:289px;">66:40</div>
<div class="m" style="left:212px;top:289px;"><span style="color:#ffff00">inc</span> <span style="color:#00ff00">ax</span></div>
<div class="m" style="left:5px;top:305px;">0040138A</div>
<div class="m" style="left:92px;top:305px;">33D2</div>
<div class="m" style="left:212px;top:305px;"><span style="color:#ffff00">xor</span> <span style="color:#00ff00">edx,edx</span></div>
<div class="m" style="left:5px;top:321px;">0040138C</div>
<div class="m" style="left:92px;top:321px;">66:8BD0</div>
<div class="m" style="left:212px;top:321px;"><span style="color:#ffff00">mov</span> <span style="color:#00ff00">dx,ax</span></div>
<div class="m" style="left:5px;top:337px;">0040138F</div>
<div class="m" style="left:92px;top:337px;">66:A3 DE334100</div>
<div class="m" style="left:212px;top:337px;"><span style="color:#ffff00">mov</span> <span style="color:#ff00ff">word ptr ds:[0x4133DE]</span><span style="color:#00ff00">,ax</span></div>
<div class="m" style="left:5px;top:353px;">00401395</div>
<div class="m" style="left:92px;top:353px;">381C32</div>
<div class="m" style="left:212px;top:353px;"><span style="color:#ffff00">cmp</span> <span style="color:#ff00ff">byte ptr ds:[edx+esi]</span><span style="color:#00ff00">,bl</span></div>
<div class="m" style="left:5px;top:369px;">00401398</div>
<svg style="position:absolute;left:76px;top:369px" width="6" height="5"><path d="M0.5 3.5L3 0.5L5.5 3.5" fill="none" stroke="#c0c0c0" stroke-width="1"/></svg>
<div class="m" style="left:92px;top:369px;">75 EE</div>
<div class="m" style="left:212px;top:369px;"><span style="color:#ff0000;background:#ffff00">jnz</span><span style="color:#ffffff"> short <i>灰</i><i>鸽</i><i>子</i><i>木</i>.00401388</span></div>
<div class="m" style="left:5px;top:385px;">0040139A</div>
<div class="m" style="left:92px;top:385px;">66:48</div>
<div class="m" style="left:212px;top:385px;"><span style="color:#ffff00">dec</span> <span style="color:#00ff00">ax</span></div>
</div>
<div class="sb" style="left:840px;top:72px;width:17px;height:411px;"></div>
<div class="sbb" style="left:840px;top:72px;width:17px;height:17px;"></div>
<svg style="position:absolute;left:840px;top:72px" width="17" height="17"><path d="M5 10 L8.5 6.5 L12 10" fill="none" stroke="#1c48b0" stroke-width="2"/></svg>
<div class="sbb" style="left:840px;top:91px;width:17px;height:17px;"></div>
<svg style="position:absolute;left:840px;top:91px" width="17" height="17"><path d="M5.5 5.5H11.5M5.5 7.5H11.5M5.5 9.5H11.5M5.5 11.5H11.5" stroke="#3c6cf0" stroke-width="1"/></svg>
<div class="sbb" style="left:840px;top:466px;width:17px;height:17px;"></div>
<svg style="position:absolute;left:840px;top:466px" width="17" height="17"><path d="M5 7 L8.5 10.5 L12 7" fill="none" stroke="#1c48b0" stroke-width="2"/></svg>
<div style="left:2px;top:485px;width:855px;height:64px;background:#000"></div>
<div class="m" style="left:7px;top:486px;">ebx=00000000</div>
<div style="left:859px;top:72px;width:505px;height:1px;background:#fff"></div>
<div style="left:859px;top:72px;width:1px;height:477px;background:#fff"></div>
<div style="left:860px;top:73px;width:504px;height:18px;background:#c0c0c0"></div>
<div style="left:860px;top:91px;width:504px;height:458px;background:#000"></div>
<div class="m" style="left:864px;top:74px;color:#000"><i>寄</i><i>存</i><i>器</i> (FPU)</div>
<svg style="position:absolute;left:1160px;top:76px" width="8" height="12"><path d="M6 2 L2 6 L6 10" fill="none" stroke="#000" stroke-width="1.6"/></svg>
<svg style="position:absolute;left:1200px;top:76px" width="8" height="12"><path d="M6 2 L2 6 L6 10" fill="none" stroke="#000" stroke-width="1.6"/></svg>
<svg style="position:absolute;left:1240px;top:76px" width="8" height="12"><path d="M6 2 L2 6 L6 10" fill="none" stroke="#000" stroke-width="1.6"/></svg>
<svg style="position:absolute;left:1280px;top:76px" width="8" height="12"><path d="M6 2 L2 6 L6 10" fill="none" stroke="#000" stroke-width="1.6"/></svg>
<svg style="position:absolute;left:1320px;top:76px" width="8" height="12"><path d="M6 2 L2 6 L6 10" fill="none" stroke="#000" stroke-width="1.6"/></svg>
<svg style="position:absolute;left:1360px;top:76px" width="8" height="12"><path d="M6 2 L2 6 L6 10" fill="none" stroke="#000" stroke-width="1.6"/></svg>
<div style="left:860px;top:91px;width:504px;height:458px;overflow:hidden">
<div class="m" style="left:4px;top:2px;">EAX <span style="color:#ff0000">0000006C</span></div>
<div class="m" style="left:4px;top:18px;">ECX <span style="color:#ff0000">7C93005D</span> ntdll.7C93005D</div>
<div class="m" style="left:4px;top:34px;">EDX <span style="color:#ff0000">001E0000</span></div>
<div class="m" style="left:4px;top:50px;">EBX <span style="color:#ff0000">00000000</span></div>
<div class="m" style="left:4px;top:66px;">ESP <span style="color:#ff0000">0012FED0</span></div>
<div class="m" style="left:4px;top:82px;">EBP <span style="color:#ff0000">0012FFC0</span></div>
<div class="m" style="left:4px;top:98px;">ESI <span style="color:#ff0000">0000006C</span></div>
<div class="m" style="left:4px;top:114px;">EDI <span style="color:#ff0000">7C810FEF</span> kernel32.GetFileSize</div>
<div class="m" style="left:4px;top:138px;">EIP <span style="color:#ff0000">7C810FEF</span> kernel32.GetFileSize</div>
<div class="m" style="left:4px;top:162px;">C <span style="color:#ff0000">1</span>  ES 0023 32<i>位</i> 0(FFFFFFFF)</div>
<div class="m" style="left:4px;top:178px;">P <span style="color:#ff0000">0</span>  CS 001B 32<i>位</i> 0(FFFFFFFF)</div>
<div class="m" style="left:4px;top:194px;">A <span style="color:#ff0000">1</span>  SS 0023 32<i>位</i> 0(FFFFFFFF)</div>
<div class="m" style="left:4px;top:210px;">Z <span style="color:#ff0000">0</span>  DS 0023 32<i>位</i> 0(FFFFFFFF)</div>
<div class="m" style="left:4px;top:226px;">S <span style="color:#ff0000">1</span>  FS 003B 32<i>位</i> 7FFDF000(FFF)</div>
<div class="m" style="left:4px;top:242px;">T 0  GS 0000 NULL</div>
<div class="m" style="left:4px;top:258px;">D 0</div>
<div class="m" style="left:4px;top:274px;">O 0  LastErr ERROR_SUCCESS (00000000)</div>
<div class="m" style="left:4px;top:298px;">EFL <span style="color:#ff0000">00000293</span> (NO,B,NE,BE,S,PO,L,LE)</div>
<div class="m" style="left:4px;top:322px;">ST0 empty -UNORM B9B0 01050104 00000069</div>
<div class="m" style="left:4px;top:338px;">ST1 empty 0.0</div>
<div class="m" style="left:4px;top:354px;">ST2 empty 0.0</div>
<div class="m" style="left:4px;top:370px;">ST3 empty 0.0</div>
<div class="m" style="left:4px;top:386px;">ST4 empty 0.0</div>
<div class="m" style="left:4px;top:402px;">ST5 empty 0.0</div>
<div class="m" style="left:4px;top:418px;">ST6 empty <span style="color:#ff0000">-0.0000000000000000000</span></div>
<div class="m" style="left:4px;top:434px;">ST7 empty <span style="color:#ff0000">-0.0000000000000000000</span></div>
<div class="m" style="left:4px;top:450px;">               3 2 1 0      E S P U O Z D I</div>
</div>
<div style="left:0px;top:549px;width:1366px;height:2px;background:#c0c0c0"></div>
<div style="left:2px;top:551px;width:651px;height:1px;background:#fff"></div>
<div style="left:2px;top:552px;width:634px;height:18px;background:#c0c0c0"></div>
<div style="left:2px;top:570px;width:634px;height:126px;background:#000"></div>
<div style="left:73px;top:552px;width:1px;height:18px;background:#000"></div>
<div style="left:457px;top:552px;width:1px;height:18px;background:#000"></div>
<div style="left:593px;top:552px;width:1px;height:18px;background:#000"></div>
<div style="left:73px;top:570px;width:1px;height:126px;background:#fff"></div>
<div style="left:169px;top:570px;width:1px;height:126px;background:#fff"></div>
<div style="left:265px;top:570px;width:1px;height:126px;background:#fff"></div>
<div style="left:361px;top:570px;width:1px;height:126px;background:#fff"></div>
<div style="left:457px;top:570px;width:1px;height:126px;background:#fff"></div>
<div style="left:593px;top:570px;width:1px;height:126px;background:#fff"></div>
<div class="m" style="left:6px;top:553px;color:#000"><i>地</i><i>址</i></div>
<div class="m" style="left:78px;top:553px;color:#000">HEX <i>数</i><i>据</i></div>
<div class="m" style="left:462px;top:553px;color:#000">ASCII</div>
<div style="left:2px;top:570px;width:634px;height:126px;overflow:hidden">
<div class="m" style="left:5px;top:2px;">00424000</div>
<div class="m" style="left:77px;top:2px;">00 00 00 00</div>
<div class="m" style="left:173px;top:2px;">00 00 00 00</div>
<div class="m" style="left:269px;top:2px;">00 00 00 00</div>
<div class="m" style="left:365px;top:2px;">00 00 03 00</div>
<div class="m" style="left:461px;top:2px;">..............<b class="blk"></b>.</div>
<div class="m" style="left:5px;top:18px;">00424010</div>
<div class="m" style="left:77px;top:18px;">03 00 00 00</div>
<div class="m" style="left:173px;top:18px;">28 00 00 80</div>
<div class="m" style="left:269px;top:18px;">0E 00 00 00</div>
<div class="m" style="left:365px;top:18px;">98 00 00 80</div>
<div class="m" style="left:461px;top:18px;"><b class="blk"></b>...(..<b class="blk"></b><b class="blk"></b>...?.<b class="blk"></b></div>
<div class="m" style="left:5px;top:34px;">00424020</div>
<div class="m" style="left:77px;top:34px;">10 00 00 00</div>
<div class="m" style="left:173px;top:34px;">D8 00 00 80</div>
<div class="m" style="left:269px;top:34px;">00 00 00 00</div>
<div class="m" style="left:365px;top:34px;">00 00 00 00</div>
<div class="m" style="left:461px;top:34px;"><b class="blk"></b>...?.<b class="blk"></b>.........</div>
<div class="m" style="left:5px;top:50px;">00424030</div>
<div class="m" style="left:77px;top:50px;">00 00 00 00</div>
<div class="m" style="left:173px;top:50px;">00 00 02 00</div>
<div class="m" style="left:269px;top:50px;">01 00 00 00</div>
<div class="m" style="left:365px;top:50px;">48 00 00 80</div>
<div class="m" style="left:461px;top:50px;">......<b class="blk"></b>.<b class="blk"></b>...H..<b class="blk"></b></div>
<div class="m" style="left:5px;top:66px;">00424040</div>
<div class="m" style="left:77px;top:66px;">02 00 00 00</div>
<div class="m" style="left:173px;top:66px;">70 00 00 80</div>
<div class="m" style="left:269px;top:66px;">00 00 00 00</div>
<div class="m" style="left:365px;top:66px;">00 00 00 00</div>
<div class="m" style="left:461px;top:66px;"><b class="blk"></b>...p..<b class="blk"></b>........</div>
<div class="m" style="left:5px;top:82px;">00424050</div>
<div class="m" style="left:77px;top:82px;">00 00 00 00</div>
<div class="m" style="left:173px;top:82px;">00 00 01 00</div>
<div class="m" style="left:269px;top:82px;">04 08 00 00</div>
<div class="m" style="left:365px;top:82px;">60 00 00 00</div>
<div class="m" style="left:461px;top:82px;">......<b class="blk"></b>.<b class="blk"></b><b class="blk"></b>..`...</div>
<div class="m" style="left:5px;top:98px;">00424060</div>
<div class="m" style="left:77px;top:98px;">64 43 02 00</div>
<div class="m" style="left:173px;top:98px;">A8 08 00 00</div>
<div class="m" style="left:269px;top:98px;">00 00 00 00</div>
<div class="m" style="left:365px;top:98px;">00 00 00 00</div>
<div class="m" style="left:461px;top:98px;">dC<b class="blk"></b>.?..........</div>
<div class="m" style="left:5px;top:114px;">00424070</div>
<div class="m" style="left:77px;top:114px;">00 00 00 00</div>
<div class="m" style="left:173px;top:114px;">00 00 00 00</div>
<div class="m" style="left:269px;top:114px;">00 00 00 00</div>
<div class="m" style="left:365px;top:114px;">00 00 01 00</div>
<div class="m" style="left:461px;top:114px;">..............<b class="blk"></b>.</div>
</div>
<div class="sb" style="left:636px;top:551px;width:17px;height:145px;"></div>
<div class="sbb" style="left:636px;top:551px;width:17px;height:17px;"></div>
<svg style="position:absolute;left:636px;top:551px" width="17" height="17"><path d="M5 10 L8.5 6.5 L12 10" fill="none" stroke="#1c48b0" stroke-width="2"/></svg>
<div class="sbb" style="left:636px;top:569px;width:17px;height:16px;"></div>
<svg style="position:absolute;left:636px;top:569px" width="17" height="17"><path d="M5.5 4.5H11.5M5.5 6.5H11.5M5.5 8.5H11.5M5.5 10.5H11.5" stroke="#3c6cf0" stroke-width="1"/></svg>
<div class="sbb" style="left:636px;top:679px;width:17px;height:17px;"></div>
<svg style="position:absolute;left:636px;top:679px" width="17" height="17"><path d="M5 7 L8.5 10.5 L12 7" fill="none" stroke="#1c48b0" stroke-width="2"/></svg>
<div style="left:655px;top:551px;width:709px;height:1px;background:#fff"></div>
<div style="left:655px;top:551px;width:1px;height:145px;background:#fff"></div>
<div style="left:656px;top:552px;width:691px;height:18px;background:#c0c0c0"></div>
<div style="left:656px;top:570px;width:691px;height:126px;background:#000"></div>
<div style="left:726px;top:552px;width:1px;height:18px;background:#000"></div>
<div style="left:726px;top:570px;width:1px;height:126px;background:#fff"></div>
<div style="left:806px;top:552px;width:1px;height:18px;background:#000"></div>
<div style="left:806px;top:570px;width:1px;height:126px;background:#fff"></div>
<div class="m" style="left:660px;top:553px;color:#000"><i>地</i><i>址</i></div>
<div class="m" style="left:731px;top:553px;color:#000"><i>数</i><i>值</i></div>
<div class="m" style="left:811px;top:553px;color:#000"><i>注</i><i>释</i></div>
<div style="left:656px;top:570px;width:691px;height:126px;overflow:hidden">
<div style="left:0px;top:1px;width:70px;height:16px;background:#c0c0c0"></div>
<div style="left:71px;top:1px;width:620px;height:16px;background:#800080"></div>
<div style="left:70px;top:1px;width:1px;height:16px;background:#fff"></div>
<div style="left:150px;top:1px;width:1px;height:16px;background:#fff"></div>
<div class="m" style="left:4px;top:2px;color:#000">0012FED0</div>
<div class="m" style="left:84px;top:2px;">00401346</div>
<div class="m" style="left:4px;top:18px;">0012FED4</div>
<div class="m" style="left:84px;top:18px;">0000006C</div>
<div class="m" style="left:4px;top:34px;">0012FED8</div>
<div class="m" style="left:84px;top:34px;">00000000</div>
<div class="m" style="left:4px;top:50px;">0012FEDC</div>
<div class="m" style="left:84px;top:50px;">7C930228</div>
<div class="m" style="left:4px;top:66px;">0012FEE0</div>
<div class="m" style="left:84px;top:66px;">00000000</div>
<div class="m" style="left:4px;top:82px;">0012FEE4</div>
<div class="m" style="left:84px;top:82px;">0012FFC0</div>
<div class="m" style="left:4px;top:98px;">0012FEE8</div>
<div class="m" style="left:84px;top:98px;">7FFD9000</div>
<div class="m" style="left:4px;top:114px;">0012FEEC</div>
<div class="m" style="left:84px;top:114px;">0012FED0</div>
<div class="m" style="left:163px;top:2px;">CALL <i>到</i> <span style="color:#ff0000">GetFileSize</span> <i>来</i><i>自</i> <i>灰</i><i>鸽</i><i>子</i><i>木</i>.00401344</div>
<div class="m" style="left:163px;top:18px;">hFile = 0000006C (window)</div>
<div class="m" style="left:163px;top:34px;">pFileSizeHigh = NULL</div>
<div style="left:155px;top:7px;width:2px;height:37px;background:#c0c0c0"></div>
<div style="left:155px;top:7px;width:7px;height:2px;background:#c0c0c0"></div>
<div style="left:155px;top:42px;width:7px;height:2px;background:#c0c0c0"></div>
<div class="m" style="left:155px;top:50px;">ntdll.7C930228</div>
</div>
<div class="sb" style="left:1347px;top:551px;width:17px;height:145px;"></div>
<div class="sbb" style="left:1347px;top:551px;width:17px;height:17px;"></div>
<svg style="position:absolute;left:1347px;top:551px" width="17" height="17"><path d="M5 10 L8.5 6.5 L12 10" fill="none" stroke="#1c48b0" stroke-width="2"/></svg>
<div class="sbb" style="left:1347px;top:660px;width:17px;height:17px;"></div>
<svg style="position:absolute;left:1347px;top:660px" width="17" height="17"><path d="M5.5 5.5H11.5M5.5 7.5H11.5M5.5 9.5H11.5M5.5 11.5H11.5" stroke="#3c6cf0" stroke-width="1"/></svg>
<div class="sbb" style="left:1347px;top:679px;width:17px;height:17px;"></div>
<svg style="position:absolute;left:1347px;top:679px" width="17" height="17"><path d="M5 7 L8.5 10.5 L12 7" fill="none" stroke="#1c48b0" stroke-width="2"/></svg>
<div style="left:0px;top:696px;width:1366px;height:1px;background:#c0c0c0"></div>
<div style="left:0px;top:697px;width:1366px;height:21px;background:#ece9d8"></div>
<div style="left:8px;top:705px;font-family:'Liberation Mono',monospace;font-weight:bold;font-size:12px;letter-spacing:-1.2px;line-height:13px;color:#ff0000">M1</div>
<div style="left:34px;top:705px;font-family:'Liberation Mono',monospace;font-weight:bold;font-size:12px;letter-spacing:-1.2px;line-height:13px;color:#000">M2</div>
<div style="left:60px;top:705px;font-family:'Liberation Mono',monospace;font-weight:bold;font-size:12px;letter-spacing:-1.2px;line-height:13px;color:#000">M3</div>
<div style="left:86px;top:705px;font-family:'Liberation Mono',monospace;font-weight:bold;font-size:12px;letter-spacing:-1.2px;line-height:13px;color:#000">M4</div>
<div style="left:112px;top:705px;font-family:'Liberation Mono',monospace;font-weight:bold;font-size:12px;letter-spacing:-1.2px;line-height:13px;color:#000">M5</div>
<div style="left:226px;top:706px;font-family:'Liberation Serif',serif;font-size:12px;letter-spacing:-0.8px;line-height:13px;color:#000">Command:</div>
<div style="left:290px;top:700px;width:199px;height:18px;background:#fff;border:1px solid #a0a0a0;border-right-color:#f0f0f0;border-bottom-color:#f0f0f0"></div>
<div style="left:471px;top:701px;width:16px;height:16px;background:#ece9d8;border:1px solid #fff;border-right-color:#404040;border-bottom-color:#404040"></div>
<svg style="position:absolute;left:474px;top:706px" width="10" height="6"><path d="M1 0H9L5 5Z" fill="#000"/></svg>
<div style="left:500px;top:700px;width:743px;height:18px;background:#ece9d8;border:1px solid #a0a0a0;border-right-color:#fff;border-bottom:none"></div>
<div style="left:1243px;top:700px;width:1px;height:18px;background:#fff"></div>
<div style="left:1268px;top:705px;font-family:'Liberation Mono',monospace;font-weight:bold;font-size:12px;letter-spacing:-1.2px;line-height:13px;color:#ff0000">ESP</div>
<div style="left:1303px;top:705px;font-family:'Liberation Mono',monospace;font-weight:bold;font-size:12px;letter-spacing:-1.2px;line-height:13px;color:#000">EBP</div>
<div style="left:1337px;top:705px;font-family:'Liberation Mono',monospace;font-weight:bold;font-size:12px;letter-spacing:-1.2px;line-height:13px;color:#000">NONE</div>
<div style="left:0px;top:718px;width:1366px;height:1px;background:#fff"></div>
<div style="left:0px;top:719px;width:1366px;height:1px;background:#808080"></div>
<div style="left:0px;top:720px;width:1366px;height:17px;background:#c0c0c0"></div>
<div style="left:2px;top:719px;width:1px;height:18px;background:#808080"></div>
<div style="left:0px;top:736px;width:1366px;height:2px;background:#fff"></div>
<div style="left:1321px;top:720px;width:42px;height:17px;border-left:1px solid #808080;border-top:1px solid #808080;border-right:1px solid #fff;border-bottom:1px solid #fff"></div>
<div style="left:4px;top:720px;white-space:pre;color:#000;font-size:13px;line-height:16px"><i style="display:inline-block;width:14px;font-style:normal">起</i><i style="display:inline-block;width:14px;font-style:normal">始</i></div>
<div style="left:31px;top:720px;white-space:pre;color:#000;font-family:'Liberation Mono',monospace;font-size:14px;letter-spacing:-1.4px;line-height:16px">:424000</div>
<div style="left:87px;top:720px;white-space:pre;color:#000;font-size:13px;line-height:16px"><i style="display:inline-block;width:14px;font-style:normal">结</i><i style="display:inline-block;width:14px;font-style:normal">束</i></div>
<div style="left:114px;top:720px;white-space:pre;color:#000;font-family:'Liberation Mono',monospace;font-size:14px;letter-spacing:-1.4px;line-height:16px">:423FFF</div>
<div style="left:169px;top:720px;white-space:pre;color:#000;font-size:13px;line-height:16px"><i style="display:inline-block;width:13px;font-style:normal">当</i><i style="display:inline-block;width:13px;font-style:normal">前</i><i style="display:inline-block;width:13px;font-style:normal">值</i></div>
<div style="left:207px;top:720px;white-space:pre;color:#000;font-family:'Liberation Mono',monospace;font-size:14px;letter-spacing:-1.4px;line-height:16px">:0</div>
<div style="left:0px;top:738px;width:1366px;height:30px;background:linear-gradient(180deg,#3a50a0 0px,#3a50a0 1px,#8ca8f0 1px,#7090e0 3px,#5a74c4 8px,#3c56a2 14px,#223c86 15px,#1a3278 21px,#12286a 26px,#0c1c5c 30px)"></div>
<div style="left:0px;top:738px;width:94px;height:30px;background:linear-gradient(180deg,#80d880 0px,#48b848 3px,#28a028 8px,#1a901a 16px,#128412 24px,#0c6c0c 30px);border-radius:0 12px 12px 0;box-shadow:inset -2px 0 2px #0a500a"></div>
<svg style="position:absolute;left:3px;top:741px" width="30" height="25"><defs><linearGradient id="fr" x1="0" y1="0" x2="0" y2="1"><stop offset="0" stop-color="#f04020"/><stop offset="1" stop-color="#ffc030"/></linearGradient><linearGradient id="fb" x1="0" y1="0" x2="0" y2="1"><stop offset="0" stop-color="#60b8ff"/><stop offset="1" stop-color="#1868d0"/></linearGradient><linearGradient id="fg" x1="0" y1="0" x2="0" y2="1"><stop offset="0" stop-color="#c0e070"/><stop offset="1" stop-color="#509020"/></linearGradient></defs><path d="M12 2 Q16 1 20 4 L15 11 Q12 8 8 9Z" fill="url(#fr)"/><path d="M7 10 Q11 9 14 12 L10 20 Q7 17 2 18Z" fill="url(#fb)"/><path d="M16 12 Q20 10 24 13 L21 22 Q17 19 12 21Z" fill="url(#fg)"/></svg>
<div style="left:41px;top:744px;color:#fff;font-weight:bold;font-size:17px;line-height:20px;letter-spacing:3px;white-space:pre;text-shadow:1px 1px 1px #0a500a">开始</div>
<svg style="position:absolute;left:104px;top:744px" width="17" height="17"><circle cx="8.5" cy="8.5" r="7.5" fill="#fff"/><circle cx="8.5" cy="8.5" r="6" fill="#30b020"/><path d="M4.5 8.5H12.5M12 8.5A3.6 3.6 0 1 0 11 11" fill="none" stroke="#fff" stroke-width="1.8"/><path d="M3 13 Q8 17 15 3" fill="none" stroke="#208010" stroke-width="1"/></svg>
<div style="left:127px;top:745px;width:8px;height:8px;background:#e04848"></div>
<div style="left:135px;top:745px;width:8px;height:8px;background:#ffd040"></div>
<div style="left:127px;top:753px;width:8px;height:8px;background:#5a6470"></div>
<div style="left:135px;top:753px;width:8px;height:8px;background:#40c8b0"></div>
<div style="left:186px;top:741px;width:158px;height:23px;background:linear-gradient(180deg,#1c2e70,#243a80);border:1px solid #142460;border-radius:3px;box-shadow:inset 1px 1px 0 #0c1850"></div>
<svg style="position:absolute;left:195px;top:745px" width="16" height="16"><circle cx="8" cy="8" r="6.8" fill="#fff" stroke="#000" stroke-width="1.6"/><path d="M5 3.5 Q10 4 12.5 10.5 H5Z" fill="#000"/><path d="M4 12 Q8 11 12 12" fill="none" stroke="#000" stroke-width="1"/></svg>
<svg style="position:absolute;left:2px;top:5px" width="16" height="16"><circle cx="8" cy="8" r="6.8" fill="#fff" stroke="#000" stroke-width="1.6"/><path d="M5 3.5 Q10 4 12.5 10.5 H5Z" fill="#000"/><path d="M4 12 Q8 11 12 12" fill="none" stroke="#000" stroke-width="1"/></svg>
<div style="left:214px;top:745px;color:#fff;font-size:13px;line-height:16px;white-space:pre">★學破解论坛★「w...</div>
<div style="left:1198px;top:745px;width:17px;height:16px;background:#3a5ab0;color:#fff;font-size:11px;line-height:16px;text-align:center">EN</div>
<div style="left:1221px;top:747px;width:1px;height:12px;background:#000"></div>
<div style="left:1250px;top:746px;width:14px;height:12px;background:#808080;border:1px solid #404040"></div>
<div style="left:1268px;top:745px;width:8px;height:7px;background:#e04848"></div>
<div style="left:1276px;top:745px;width:8px;height:7px;background:#ffd040"></div>
<div style="left:1268px;top:752px;width:8px;height:7px;background:#5a6470"></div>
<div style="left:1276px;top:752px;width:8px;height:7px;background:#40c8b0"></div>
<div style="left:1300px;top:745px;width:10px;height:12px;background:#40c040;border-radius:2px"></div>
<div style="left:1245px;top:721px;color:#fff;font-size:19px;line-height:24px;white-space:pre;text-shadow:1px 1px 1px #505050"><i style="display:inline-block;width:19px;font-style:normal">我</i><i style="display:inline-block;width:19px;font-style:normal">爱</i><i style="display:inline-block;width:19px;font-style:normal">辅</i><i style="display:inline-block;width:19px;font-style:normal">助</i><i style="display:inline-block;width:19px;font-style:normal">论</i><i style="display:inline-block;width:19px;font-style:normal">坛</i></div>
<div style="left:1247px;top:744px;color:#fff;font-weight:bold;font-size:15px;line-height:20px;white-space:pre;letter-spacing:-0.75px;text-shadow:1px 1px 1px #404040">www.52fzba.com</div></body></html>
